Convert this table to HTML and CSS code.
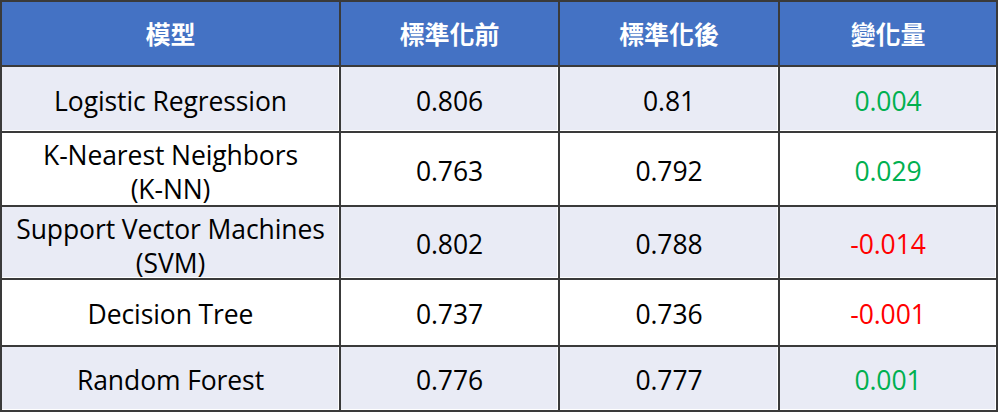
FILE: index.html
```html
<!DOCTYPE html>
<html lang="zh-Hant">
<head>
<meta charset="utf-8">
<link rel="stylesheet" href="styles.css">
</head>
<body>
<div class="table">
  <div class="cell head">模型</div>
  <div class="cell head">標準化前</div>
  <div class="cell head">標準化後</div>
  <div class="cell head">變化量</div>

  <div class="cell alt">Logistic Regression</div>
  <div class="cell alt">0.806</div>
  <div class="cell alt">0.81</div>
  <div class="cell alt pos">0.004</div>

  <div class="cell two">K-Nearest Neighbors<br>(K-NN)</div>
  <div class="cell">0.763</div>
  <div class="cell">0.792</div>
  <div class="cell pos">0.029</div>

  <div class="cell alt two">Support Vector Machines<br>(SVM)</div>
  <div class="cell alt">0.802</div>
  <div class="cell alt">0.788</div>
  <div class="cell alt neg">-0.014</div>

  <div class="cell">Decision Tree</div>
  <div class="cell">0.737</div>
  <div class="cell">0.736</div>
  <div class="cell neg">-0.001</div>

  <div class="cell alt">Random Forest</div>
  <div class="cell alt">0.776</div>
  <div class="cell alt">0.777</div>
  <div class="cell alt pos">0.001</div>
</div>
</body>
</html>
```
FILE: styles.css
```css
html, body {
  margin: 0;
  padding: 0;
  background: #ffffff;
}
.table {
  display: grid;
  width: 998px;
  box-sizing: border-box;
  padding: 2px;
  gap: 2px;
  background: #3a3a3a;
  grid-template-columns: 337px 217px 218px 216px;
  grid-template-rows: 63px 64px 72px 71px 65px 63px;
  font-family: "Open Sans", "Noto Sans CJK TC", sans-serif;
  font-size: 26.5px;
  line-height: 34px;
  color: #000;
}
.cell {
  background: #ffffff;
  display: flex;
  align-items: center;
  justify-content: center;
  text-align: center;
  padding-top: 3px;
  letter-spacing: -0.1px;
}
.cell.two {
  padding-top: 6px;
}
.cell.alt {
  background: #e9ebf5;
  box-shadow: inset -1px -1px 0 #ffffff;
}
.cell.head {
  background: #4472c4;
  color: #ffffff;
  font-family: "Noto Sans CJK TC", sans-serif;
  font-weight: 700;
  font-size: 25px;
  padding-top: 0;
  padding-bottom: 2px;
}
.pos { color: #00b050; }
.neg { color: #ff0000; }
```
